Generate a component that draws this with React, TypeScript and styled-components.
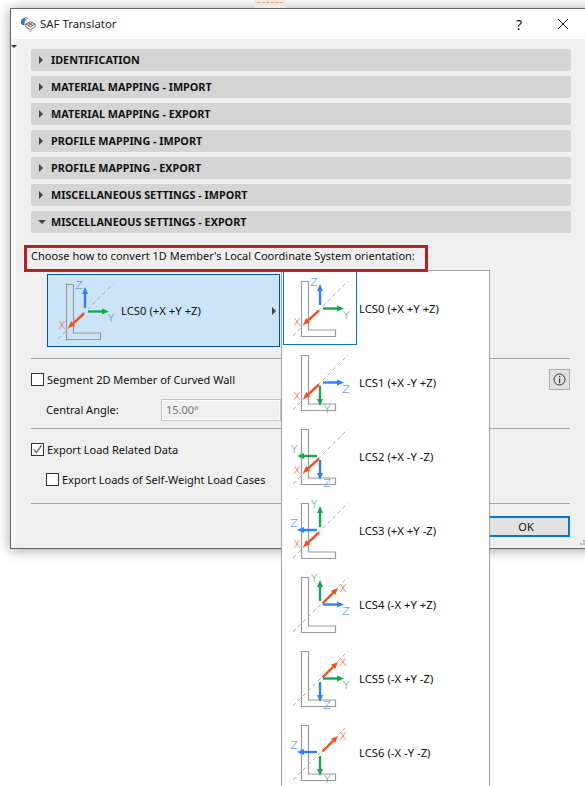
import styled, { createGlobalStyle } from "styled-components";

const GlobalStyle = createGlobalStyle`
  html, body {
    margin: 0;
    padding: 0;
    background: #fff;
    overflow: hidden;
  }
  body {
    font-family: "Noto Sans", "Open Sans", sans-serif;
    color: #111;
  }
`;

const Page = styled.div`
  position: relative;
  width: 585px;
  height: 786px;
  overflow: hidden;
  background: #fff;
  padding: 8px 0 0 10px;
  box-sizing: border-box;
`;

const TopTab = styled.div`
  position: absolute;
  top: 0;
  left: 254px;
  width: 32px;
  height: 8px;
  background: #e9e9e9;
  z-index: 2;

  &::after {
    content: "";
    position: absolute;
    left: 3px;
    right: 3px;
    top: 2px;
    border-top: 1px dashed #f2a35e;
  }
`;

const Window = styled.div`
  width: 600px;
  height: 541px;
  box-sizing: border-box;
  border: 1px solid #666;
  border-right: none;
  background: #efefef;
  box-shadow: 0 1px 12px rgba(0, 0, 0, 0.38);
  display: flex;
  flex-direction: column;
`;

const TitleBar = styled.div`
  height: 30px;
  flex: none;
  background: #fff;
  display: flex;
  align-items: center;
  padding-left: 9px;
  font-size: 11.4px;
`;

const TitleText = styled.span`
  margin: 0 392px 2px 3px;
  width: 86px;
  color: #222;
`;

const HelpMark = styled.span`
  width: 14px;
  text-align: center;
  font-size: 14px;
  margin-left: -6px;
`;

const CloseMark = styled.svg`
  margin-left: 31px;
`;

const Body = styled.div`
  flex: 1;
  display: grid;
  grid-template-columns: 5px 1fr;
  min-height: 0;
`;

const Gutter = styled.div`
  background: #f6f6f6;
  padding-top: 6px;
`;

const GutterMark = styled.div`
  width: 0;
  height: 0;
  border-left: 3px solid transparent;
  border-right: 3px solid transparent;
  border-top: 3px solid #333;
`;

const Main = styled.div`
  position: relative;
  padding: 10px 0 0 15px;
  width: 540px;
`;

const Sections = styled.div`
  display: flex;
  flex-direction: column;
  gap: 5px;
`;

const Section = styled.div`
  height: 22px;
  box-sizing: border-box;
  background: #d4d4d4;
  border-radius: 2px;
  display: flex;
  align-items: center;
  padding: 0 0 1px 8px;
  font-size: 10.8px;
  font-weight: 700;
  color: #111;
`;

const Caret = styled.span<{ $open?: boolean }>`
  width: 0;
  height: 0;
  ${(p) =>
    p.$open
      ? `border-left: 4px solid transparent;
         border-right: 4px solid transparent;
         border-top: 4px solid #444;
         margin-left: -1px;
         margin-right: 5px;`
      : `border-top: 4px solid transparent;
         border-bottom: 4px solid transparent;
         border-left: 4px solid #444;
         margin-right: 8px;`}
`;

const Highlight = styled.div`
  position: relative;
  z-index: 3;
  width: 404px;
  height: 27px;
  box-sizing: border-box;
  margin: 12px 0 0 -7px;
  border: 3px solid #b22222;
  padding: 0 0 7px 4px;
  display: flex;
  align-items: center;
  font-size: 11px;
  white-space: nowrap;
`;

const ChoiceButton = styled.div`
  width: 233px;
  height: 73px;
  box-sizing: border-box;
  margin: 2px 0 0 16px;
  background: #cce4f7;
  border: 1px solid #005499;
  display: flex;
  align-items: center;
  font-size: 11.3px;
  white-space: nowrap;
`;

const ChoiceLabel = styled.span`
  flex: 1;
  margin-left: -1px;
`;

const ChoiceCaret = styled.span`
  width: 0;
  height: 0;
  margin-right: 3px;
  border-top: 4px solid transparent;
  border-bottom: 4px solid transparent;
  border-left: 4px solid #444;
`;

const Rule = styled.div<{ $top: number }>`
  height: 1px;
  background: #a6a6a6;
  margin: ${(p) => p.$top}px 1px 0 0;
`;

const Row = styled.div<{ $top: number; $indent?: number }>`
  display: flex;
  align-items: center;
  justify-content: space-between;
  margin: ${(p) => p.$top}px 1px 0 ${(p) => p.$indent ?? 0}px;
  font-size: 11px;
  line-height: 13px;
  white-space: nowrap;
`;

const CheckLabel = styled.div`
  display: flex;
  align-items: center;
  gap: 3px;
`;

const Box = styled.span`
  width: 11px;
  height: 11px;
  border: 1px solid #333;
  background: #fff;
  display: flex;
  flex: none;
`;

const FieldLabel = styled.span`
  width: 112px;
  margin-left: 15px;
  padding-bottom: 1px;
`;

const Field = styled.div`
  width: 120px;
  height: 22px;
  box-sizing: border-box;
  background: #f0f0f0;
  border: 1px solid #c4c4c4;
  box-shadow: inset 0 0 0 1px #fbfbfb;
  color: #777;
  padding: 0 0 1px 4px;
  display: flex;
  align-items: center;
`;

const InfoButton = styled.div`
  width: 21px;
  height: 21px;
  box-sizing: border-box;
  background: #e1e1e1;
  border: 1px solid #adadad;
  display: flex;
  align-items: center;
  justify-content: center;
`;

const Footer = styled.div`
  display: flex;
  justify-content: flex-end;
  margin: 12px 1px 0 0;
`;

const OkButton = styled.div`
  width: 88px;
  height: 21px;
  box-sizing: border-box;
  background: #e1e1e1;
  border: 2px solid #0078d7;
  font-size: 11px;
  padding-bottom: 1px;
  display: flex;
  align-items: center;
  justify-content: center;
`;

const Grip = styled.svg`
  position: absolute;
  left: 564px;
  bottom: 2px;
`;

const Popup = styled.div`
  position: absolute;
  left: 281px;
  top: 270px;
  width: 209px;
  height: 540px;
  box-sizing: border-box;
  background: #fff;
  border: 1px solid #a0a0a0;
  padding-left: 1px;
  z-index: 2;
`;

const PopupItem = styled.div`
  height: 74px;
  display: flex;
  align-items: center;
  font-size: 11.3px;
  white-space: nowrap;
`;

const IconCell = styled.div<{ $selected?: boolean }>`
  width: 74px;
  height: 74px;
  box-sizing: border-box;
  flex: none;
  outline: ${(p) => (p.$selected ? "1px solid #0078d7" : "none")};
  outline-offset: -1px;
  margin-right: 2px;
`;

const AxisLetter = styled.text`
  font-family: "DejaVu Sans", sans-serif;
  font-size: 11px;
  font-weight: 200;
  text-anchor: middle;
`;

type Dir = "up" | "down" | "left" | "right";

const BLUE = "#2f80ff";
const GREEN = "#14a84b";
const RED = "#f4501e";

// shaft start, tip and where the letter goes for each direction
const dirs: Record<Dir, { from: [number, number]; to: [number, number]; label: [number, number] }> = {
  up: { from: [37, 34], to: [37, 13], label: [31, 15] },
  down: { from: [37, 41], to: [37, 61], label: [44, 68] },
  left: { from: [34, 37], to: [14, 37], label: [11, 34] },
  right: { from: [40, 37.5], to: [61, 37.5], label: [63, 48] },
};

function Arrow({ from, to, color }: { from: [number, number]; to: [number, number]; color: string }) {
  const dx = to[0] - from[0];
  const dy = to[1] - from[1];
  const len = Math.hypot(dx, dy);
  const ux = dx / len;
  const uy = dy / len;
  const bx = to[0] - ux * 7;
  const by = to[1] - uy * 7;
  const head = `${to[0]},${to[1]} ${bx - uy * 3},${by + ux * 3} ${bx + uy * 3},${by - ux * 3}`;
  return (
    <g>
      <line x1={from[0]} y1={from[1]} x2={bx} y2={by} stroke={color} strokeWidth={2.4} />
      <polygon points={head} fill={color} />
    </g>
  );
}

function AxisIcon({ xUp, y, z }: { xUp?: boolean; y: Dir; z: Dir }) {
  const yd = dirs[y];
  const zd = dirs[z];
  return (
    <svg width="74" height="74" viewBox="0 0 74 74">
      <path d="M18.5 10.5h7v48.5h27v6.5h-34z" fill="none" stroke="#9a9a9a" strokeWidth="1.2" />
      <line x1="10" y1="65" x2="65" y2="10" stroke="#b0b0b0" strokeWidth="1" strokeDasharray="4 3" />
      <Arrow from={zd.from} to={zd.to} color={BLUE} />
      <Arrow from={yd.from} to={yd.to} color={GREEN} />
      {xUp ? (
        <Arrow from={[39.5, 36.5]} to={[55, 21]} color={RED} />
      ) : (
        <Arrow from={[36, 39.5]} to={[20, 54]} color={RED} />
      )}
      <AxisLetter x={zd.label[0]} y={zd.label[1]} fill={BLUE}>Z</AxisLetter>
      <AxisLetter x={yd.label[0]} y={yd.label[1]} fill={GREEN}>Y</AxisLetter>
      <AxisLetter x={xUp ? 60 : 14} y={xUp ? 25 : 55} fill={RED}>X</AxisLetter>
    </svg>
  );
}

function TitleIcon() {
  return (
    <svg width="17" height="18" viewBox="0 0 18 18">
      <path d="M1 7C1 3 5 1 9 2.500L6 5C5 6 4.500 8 5 10L2.500 10C1.500 9.500 1 8.500 1 7z" fill="#3c6fc4" />
      <path d="M5 2.500L9 3L6 5.500z" fill="#9cc0ee" />
      <path d="M6 9l5-2.500 5 2.500-5 3z" fill="#e8e8e8" stroke="#555" strokeWidth="0.9" />
      <path d="M8 9l3-1.500 2.500 1.500-2.500 1.500z" fill="#d9653b" />
      <path d="M6 9v3l5 3 5-3V9" fill="none" stroke="#666" strokeWidth="0.9" />
      <path d="M9 15.500l2 2 2-2" fill="none" stroke="#8aa6c8" strokeWidth="1" />
    </svg>
  );
}

const items: { label: string; xUp?: boolean; y: Dir; z: Dir }[] = [
  { label: "LCS0 (+X +Y +Z)", y: "right", z: "up" },
  { label: "LCS1 (+X -Y +Z)", y: "down", z: "right" },
  { label: "LCS2 (+X -Y -Z)", y: "left", z: "down" },
  { label: "LCS3 (+X +Y -Z)", y: "up", z: "left" },
  { label: "LCS4 (-X +Y +Z)", xUp: true, y: "up", z: "right" },
  { label: "LCS5 (-X +Y -Z)", xUp: true, y: "right", z: "down" },
  { label: "LCS6 (-X -Y -Z)", xUp: true, y: "down", z: "left" },
];

const sections = [
  "IDENTIFICATION",
  "MATERIAL MAPPING - IMPORT",
  "MATERIAL MAPPING - EXPORT",
  "PROFILE MAPPING - IMPORT",
  "PROFILE MAPPING - EXPORT",
  "MISCELLANEOUS SETTINGS - IMPORT",
  "MISCELLANEOUS SETTINGS - EXPORT",
];

export default function App() {
  return (
    <>
      <GlobalStyle />
      <Page>
        <TopTab />
        <Window>
          <TitleBar>
            <TitleIcon />
            <TitleText>SAF Translator</TitleText>
            <HelpMark>?</HelpMark>
            <CloseMark width="12" height="12" viewBox="0 0 12 12">
              <path d="M1 1l10 10M11 1L1 11" stroke="#222" strokeWidth="1" />
            </CloseMark>
          </TitleBar>
          <Body>
            <Gutter>
              <GutterMark />
            </Gutter>
            <Main>
              <Sections>
                {sections.map((s, i) => (
                  <Section key={s}>
                    <Caret $open={i === sections.length - 1} />
                    {s}
                  </Section>
                ))}
              </Sections>
              <Highlight>Choose how to convert 1D Member's Local Coordinate System orientation:</Highlight>
              <ChoiceButton>
                <AxisIcon y="right" z="up" />
                <ChoiceLabel>LCS0 (+X +Y +Z)</ChoiceLabel>
                <ChoiceCaret />
              </ChoiceButton>
              <Rule $top={11} />
              <Row $top={10}>
                <CheckLabel>
                  <Box />
                  Segment 2D Member of Curved Wall
                </CheckLabel>
                <InfoButton>
                  <svg width="13" height="13" viewBox="0 0 13 13">
                    <circle cx="6.500" cy="6.500" r="5.500" fill="none" stroke="#333" strokeWidth="1" />
                    <rect x="6" y="5.500" width="1.200" height="4.500" fill="#333" />
                    <rect x="6" y="3" width="1.200" height="1.300" fill="#333" />
                  </svg>
                </InfoButton>
              </Row>
              <Row $top={9}>
                <CheckLabel>
                  <FieldLabel>Central Angle:</FieldLabel>
                  <Field>15.00°</Field>
                </CheckLabel>
              </Row>
              <Rule $top={7} />
              <Row $top={14}>
                <CheckLabel>
                  <Box>
                    <svg width="11" height="11" viewBox="0 0 11 11">
                      <path d="M1.500 5.500l3 3 5-7" fill="none" stroke="#666" strokeWidth="1.300" />
                    </svg>
                  </Box>
                  Export Load Related Data
                </CheckLabel>
              </Row>
              <Row $top={17} $indent={15}>
                <CheckLabel>
                  <Box />
                  Export Loads of Self-Weight Load Cases
                </CheckLabel>
              </Row>
              <Rule $top={17} />
              <Footer>
                <OkButton>OK</OkButton>
              </Footer>
              <Grip width="9" height="9" viewBox="0 0 9 9">
                <path d="M6 0h2v2H6zM3 3h2v2H3zM6 3h2v2H6zM0 6h2v2H0zM3 6h2v2H3zM6 6h2v2H6z" fill="#b5b5b5" />
              </Grip>
            </Main>
          </Body>
        </Window>
        <Popup>
          {items.map((it, i) => (
            <PopupItem key={it.label}>
              <IconCell $selected={i === 0}>
                <AxisIcon xUp={it.xUp} y={it.y} z={it.z} />
              </IconCell>
              {it.label}
            </PopupItem>
          ))}
        </Popup>
      </Page>
    </>
  );
}
